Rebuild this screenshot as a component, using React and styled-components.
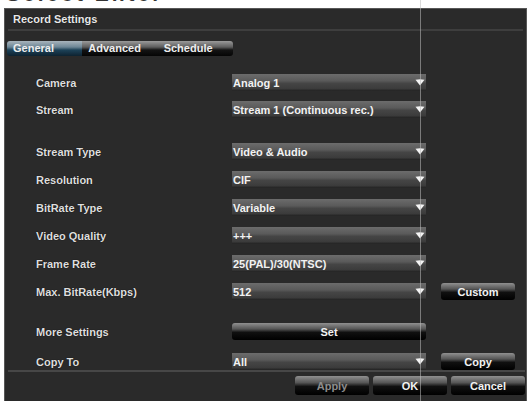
import React from "react";
import styled, { createGlobalStyle } from "styled-components";

const GlobalStyle = createGlobalStyle`
  html, body {
    margin: 0;
    padding: 0;
    background: #ffffff;
  }
  body {
    font-family: "Liberation Sans", Arial, sans-serif;
  }
`;

const ROWS = [
  { label: "Camera", value: "Analog 1", top: 18 },
  { label: "Stream", value: "Stream 1 (Continuous rec.)", top: 10 },
  { label: "Stream Type", value: "Video & Audio", top: 25 },
  { label: "Resolution", value: "CIF", top: 11 },
  { label: "BitRate Type", value: "Variable", top: 11 },
  { label: "Video Quality", value: "+++", top: 11 },
  { label: "Frame Rate", value: "25(PAL)/30(NTSC)", top: 11 },
  { label: "Max. BitRate(Kbps)", value: "512", top: 11, button: "Custom" },
];

const Arrow = () => (
  <svg width="10" height="7" viewBox="0 0 10 7">
    <path d="M0.5 0.8 Q5 -0.2 9.5 0.8 L5 6.5 Z" fill="#f4f4f4" />
  </svg>
);

const Dropdown = ({ value }) => (
  <Select>
    <SelectText>{value}</SelectText>
    <Arrow />
  </Select>
);

const App = () => {
  return (
    <>
      <GlobalStyle />
      <Page>
        <TopStrip>
          <TopText>Select Enter</TopText>
        </TopStrip>
        <Window>
          <TitleBar>Record Settings</TitleBar>
          <Tabs>
            <Tab $active>General</Tab>
            <Tab>Advanced</Tab>
            <Tab>Schedule</Tab>
          </Tabs>
          <Form>
            {ROWS.map((row) => (
              <Row key={row.label} $top={row.top}>
                <Label>{row.label}</Label>
                <Dropdown value={row.value} />
                {row.button && <SideButton>{row.button}</SideButton>}
              </Row>
            ))}
            <Row $top={23}>
              <Label>More Settings</Label>
              <WideButton>Set</WideButton>
            </Row>
            <Row $top={13}>
              <Label>Copy To</Label>
              <Dropdown value="All" />
              <SideButton>Copy</SideButton>
            </Row>
          </Form>
          <Footer>
            <FooterButton $disabled>Apply</FooterButton>
            <FooterButton>OK</FooterButton>
            <FooterButton>Cancel</FooterButton>
          </Footer>
        </Window>
        <ScanLine />
      </Page>
    </>
  );
};

const Page = styled.div`
  position: relative;
  width: 532px;
  height: 401px;
  overflow: hidden;
  background: #ffffff;
`;

const TopStrip = styled.div`
  height: 8px;
  overflow: hidden;
  padding-left: 6px;
`;

const TopText = styled.div`
  margin-top: -18px;
  font-size: 21px;
  line-height: 24px;
  font-weight: bold;
  color: #333;
  letter-spacing: 3px;
`;

const Window = styled.div`
  margin-left: 4px;
  width: 523px;
  height: 393px;
  box-sizing: border-box;
  background: #2a2a2a;
  border: 1px solid #575757;
  border-bottom: none;
  display: flex;
  flex-direction: column;
  color: #e4e4e4;
  font-size: 11px;
  font-weight: bold;
`;

const TitleBar = styled.div`
  height: 21px;
  display: flex;
  align-items: center;
  padding-left: 5px;
  margin: 0 3px;
  border-bottom: 2px solid #3e3e3e;
  color: #e8e8e8;
  text-shadow: 0 0 1px #000;
`;

const Tabs = styled.div`
  display: flex;
  margin: 10px 0 0 2px;
  width: 226px;
  height: 16px;
`;

const Tab = styled.div`
  flex: 1;
  display: flex;
  align-items: center;
  padding-left: 6px;
  color: #eeeeee;
  border-radius: ${({ $active }) => ($active ? "3px 0 0 3px" : "0")};
  background: ${({ $active }) =>
    $active
      ? "linear-gradient(to bottom, #a8b4bc 0%, #6e8796 40%, #1d4258 60%, #0e2230 100%)"
      : "linear-gradient(to bottom, #9a9a9a 0%, #5e5e5e 40%, #141414 60%, #050505 100%)"};
  &:last-child {
    border-radius: 0 3px 3px 0;
  }
`;

const Form = styled.div`
  display: flex;
  flex-direction: column;
  padding-left: 31px;
  flex: 1;
`;

const Row = styled.div`
  display: flex;
  align-items: center;
  height: 17px;
  margin-top: ${({ $top }) => $top}px;
`;

const Label = styled.div`
  width: 196px;
  color: #dedede;
  text-shadow: 0 0 1px #000;
`;

const Select = styled.div`
  width: 194px;
  height: 17px;
  box-sizing: border-box;
  display: flex;
  align-items: center;
  justify-content: space-between;
  padding: 0 1px 0 1px;
  background: linear-gradient(
    to bottom,
    #6c6c6c 0%,
    #5a5a5a 40%,
    #454545 55%,
    #3c3c3c 85%,
    #222222 100%
  );
  color: #f2f2f2;
`;

const SelectText = styled.span`
  white-space: nowrap;
`;

const buttonLook = `
  box-sizing: border-box;
  display: flex;
  align-items: center;
  justify-content: center;
  border-radius: 3px;
  background: linear-gradient(
    to bottom,
    #909090 0%,
    #565656 35%,
    #101010 55%,
    #000000 100%
  );
  color: #f2f2f2;
`;

const SideButton = styled.div`
  ${buttonLook}
  width: 74px;
  height: 17px;
  margin-left: 15px;
`;

const WideButton = styled.div`
  ${buttonLook}
  width: 194px;
  height: 17px;
`;

const Footer = styled.div`
  display: flex;
  justify-content: flex-end;
  gap: 4px;
  margin: 0 1px 3px 3px;
  padding: 4px 0 3px;
  border-top: 2px solid #474747;
`;

const FooterButton = styled.div`
  ${buttonLook}
  width: 74px;
  height: 19px;
  color: ${({ $disabled }) => ($disabled ? "#8c8c8c" : "#f2f2f2")};
`;

const ScanLine = styled.div`
  position: absolute;
  left: 420px;
  top: 0;
  width: 1px;
  height: 401px;
  background: rgba(190, 190, 190, 0.55);
  pointer-events: none;
`;

export default App;
